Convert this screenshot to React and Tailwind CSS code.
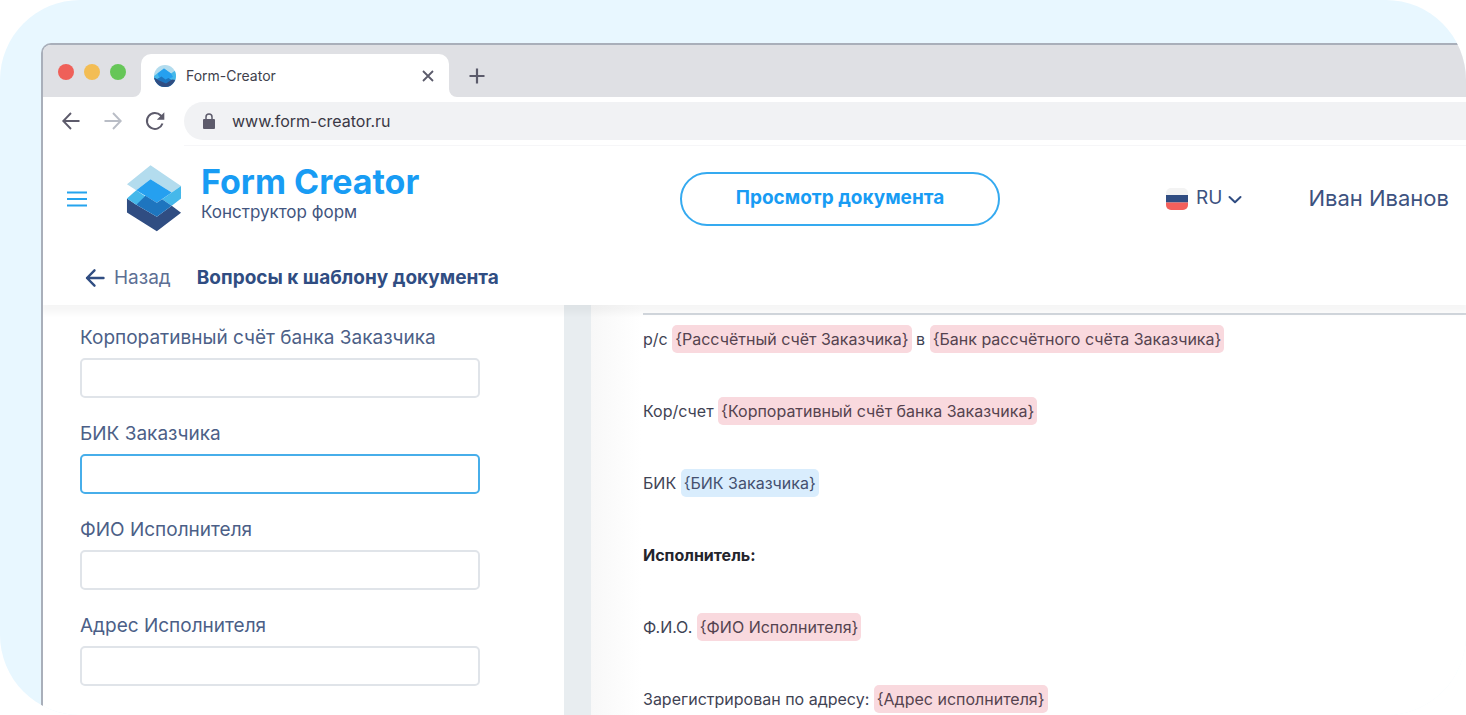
import { useId } from "react";

const fields = [
  { id: "corr", label: "Корпоративный счёт банка Заказчика" },
  { id: "bik", label: "БИК Заказчика", active: true },
  { id: "fio", label: "ФИО Исполнителя" },
  { id: "addr", label: "Адрес Исполнителя" },
];

function LogoShapes() {
  return (
    <>
      <path d="M123 31 215 93 187 113 123 73 80 106 52 88Z" fill="#b3dcee" />
      <path d="M52 131 80 150 142 186 187 153 215 174 142 230 52 173Z" fill="#304d82" />
      <path d="M80 106 108 125 115 130 80 150 52 131Z" fill="#45b8ea" />
      <path d="M215 93V131L187 153 158 133 187 113Z" fill="#45b8ea" />
      <path d="M123 73 187 113 142 144 80 106Z" fill="#25a0f0" />
      <path d="M108 123 142 144 158 133 187 153 142 186 80 150Z" fill="#1e75bf" />
    </>
  );
}

function Favicon() {
  const clip = useId();
  return (
    <svg className="h-[22px] w-[22px] shrink-0" viewBox="0 0 22 22" aria-hidden="true">
      <clipPath id={clip}>
        <circle cx="11" cy="11" r="11" />
      </clipPath>
      <g clipPath={`url(#${clip})`}>
        <path d="M0 0H22V22H0Z" fill="#b3dcee" />
        <path d="M0 11 10 3.500 17 8.500 22 5V22H0Z" fill="#45b8ea" />
        <path d="M3.500 8.500 10 3.500 17 8.500 19 12 12 15 5 12Z" fill="#25a0f0" />
        <path d="M0 13 3 14 7.500 11.500 11.500 14.500 14.500 13 18.500 15.500 16 22H4Z" fill="#1e75bf" />
        <path d="M0 12.500 4 15 12 18.500 18 14.500 22 15V22H0Z" fill="#304d82" />
      </g>
    </svg>
  );
}

function TabStrip() {
  return (
    <div className="flex h-[52px] items-end bg-[#dfe0e4] pl-[15px]">
      <div className="flex h-full items-center gap-[10px] pr-[7px] pt-0.5">
        <span className="h-4 w-4 rounded-full bg-[#ef6059]" />
        <span className="h-4 w-4 rounded-full bg-[#f3bd54]" />
        <span className="h-4 w-4 rounded-full bg-[#66c658]" />
      </div>
      <svg className="h-2 w-2 shrink-0" viewBox="0 0 8 8" aria-hidden="true">
        <path d="M8 0V8H0A8 8 0 0 0 8 0Z" fill="#fff" />
      </svg>
      <div className="flex h-[43px] w-[308px] items-center rounded-t-[10px] bg-white pl-[13px] pr-[14px]">
        <Favicon />
        <span className="ml-[10px] text-sm text-[#403f4c]">Form-Creator</span>
        <button type="button" aria-label="Закрыть вкладку" className="ml-auto">
          <svg className="h-[14px] w-[14px]" viewBox="0 0 14 14" fill="none" stroke="#5b5b6b" strokeWidth="1.8" aria-hidden="true">
            <path d="M2 2 12 12M12 2 2 12" />
          </svg>
        </button>
      </div>
      <svg className="h-2 w-2 shrink-0" viewBox="0 0 8 8" aria-hidden="true">
        <path d="M0 0V8H8A8 8 0 0 1 0 0Z" fill="#fff" />
      </svg>
      <button type="button" aria-label="Новая вкладка" className="flex h-[43px] items-center pl-3">
        <svg className="h-4 w-4" viewBox="0 0 16 16" fill="none" stroke="#5b5b6b" strokeWidth="2.200" aria-hidden="true">
          <path d="M8 .5V15.5M.5 8H15.5" />
        </svg>
      </button>
    </div>
  );
}

function Toolbar() {
  return (
    <div className="flex h-12 items-center pl-[18px]">
      <button type="button" aria-label="Назад по истории">
        <svg className="h-5 w-5" viewBox="0 0 20 20" fill="none" stroke="#5d5b6b" strokeWidth="1.9" aria-hidden="true">
          <path d="M18.500 10H2.500M10 2 2.300 10 10 18" />
        </svg>
      </button>
      <button type="button" aria-label="Вперёд" className="ml-[22px]">
        <svg className="h-5 w-5" viewBox="0 0 20 20" fill="none" stroke="#b9bdc6" strokeWidth="1.9" aria-hidden="true">
          <path d="M1.500 10H17.500M10 2 17.700 10 10 18" />
        </svg>
      </button>
      <button type="button" aria-label="Обновить" className="ml-[22px]">
        <svg className="h-5 w-5" viewBox="0 0 20 20" fill="none" stroke="#5d5b6b" strokeWidth="2" aria-hidden="true">
          <path d="M17.500 12.500A8 8 0 1 1 15.800 4.500L17.500 6.500" />
          <path d="M19.300 1.200V8.700H11.800Z" fill="#5d5b6b" stroke="none" />
        </svg>
      </button>
      <div className="ml-[19px] flex h-[38px] flex-1 items-center rounded-l-full bg-[#f1f2f4] pl-[19px]">
        <svg className="h-4 w-3 shrink-0" viewBox="0 0 12 16" aria-hidden="true">
          <path d="M3 7V4A3 3 0 0 1 9 4V7" fill="none" stroke="#5d5b6b" strokeWidth="1.5" />
          <rect y="6" width="12" height="10" rx="1" fill="#5d5b6b" />
        </svg>
        <input
          type="text"
          aria-label="Адресная строка"
          defaultValue="www.form-creator.ru"
          className="ml-[17px] flex-1 bg-transparent text-base text-[#3a3845] outline-none"
        />
      </div>
    </div>
  );
}

function Header() {
  return (
    <header className="relative z-10 bg-white shadow-[0_6px_6px_2px_rgba(0,0,0,0.04)]">
      <div className="ml-[141px] border-t border-[#f6f6f8]" />
      <div className="flex h-[105px] items-center pr-[17px]">
        <div className="flex w-[637px] shrink-0 items-center pl-6">
          <button type="button" aria-label="Меню">
            <svg className="h-4 w-5" viewBox="0 0 20 16" stroke="#25a4ee" strokeWidth="1.8" aria-hidden="true">
              <path d="M0 1.500H20M0 8H20M0 14.500H20" />
            </svg>
          </button>
          <a href="#" className="ml-[39px] flex items-center">
            <svg className="h-[67px] w-[56px]" viewBox="50 30 167 202" aria-hidden="true">
              <LogoShapes />
            </svg>
            <span className="ml-[19px] block pb-[9px]">
              <span className="block text-[34px] font-bold leading-9 text-[#189cf4]">Form Creator</span>
              <span className="block text-[17px] leading-6 text-[#42557e]">Конструктор форм</span>
            </span>
          </a>
        </div>
        <button
          type="button"
          className="h-[54px] w-80 shrink-0 rounded-full border-2 border-[#35aaf0] text-[19px] font-bold text-[#189cf4]"
        >
          Просмотр документа
        </button>
        <button type="button" className="ml-auto flex items-center text-[19px] text-[#3d527f]">
          <svg className="h-[22px] w-[22px]" viewBox="0 0 22 22" aria-hidden="true">
            <rect width="22" height="22" rx="5" fill="#f3f3f3" />
            <path d="M0 7H22V14.500H0Z" fill="#304d82" />
            <path d="M0 14.500H22V17A5 5 0 0 1 17 22H5A5 5 0 0 1 0 17Z" fill="#f4605c" />
          </svg>
          <span className="ml-2">RU</span>
          <svg className="ml-[6px] h-[14px] w-[14px]" viewBox="0 0 14 14" fill="none" stroke="#304d82" strokeWidth="2" strokeLinecap="round" strokeLinejoin="round" aria-hidden="true">
            <path d="M1.500 5 7 10.300 12.500 5" />
          </svg>
        </button>
        <span className="ml-[66px] text-[22px] text-[#3d527f]">Иван Иванов</span>
      </div>
      <div className="flex h-[54px] items-center pl-[42px]">
        <a href="#" className="flex items-center text-[19px] text-[#5d6f94]">
          <svg className="mr-[9px] h-5 w-5" viewBox="0 0 20 20" fill="none" stroke="#304d82" strokeWidth="2.400" strokeLinecap="round" strokeLinejoin="round" aria-hidden="true">
            <path d="M18.500 10H2M9.500 2.300 2 10 9.500 17.700" />
          </svg>
          Назад
        </a>
        <h1 className="ml-[26px] text-[19px] font-bold text-[#304d82]">Вопросы к шаблону документа</h1>
      </div>
    </header>
  );
}

function Mark({ active, children }) {
  return (
    <mark
      className={
        active
          ? "rounded-[5px] bg-[#d9edfd] px-[3px] py-1 text-[#44506f]"
          : "rounded-[5px] bg-[#f9d9de] px-[3px] py-1 text-[#55434f]"
      }
    >
      {children}
    </mark>
  );
}

function Document() {
  return (
    <article className="min-w-0 flex-1 bg-linear-to-r from-[#f8f8f8] to-white to-[50px] pl-[52px] pt-2">
      <div className="flex flex-col gap-[46px] border-t-2 border-[#d3d8de] pt-[11px] text-base leading-[26px] text-[#3f4354]">
        <p>р/с <Mark>{"{Рассчётный счёт Заказчика}"}</Mark> в <Mark>{"{Банк рассчётного счёта Заказчика}"}</Mark></p>
        <p>Кор/счет <Mark>{"{Корпоративный счёт банка Заказчика}"}</Mark></p>
        <p>БИК <Mark active>{"{БИК Заказчика}"}</Mark></p>
        <p className="font-bold text-[#24242c]">Исполнитель:</p>
        <p>Ф.И.О. <Mark>{"{ФИО Исполнителя}"}</Mark></p>
        <p>Зарегистрирован по адресу: <Mark>{"{Адрес исполнителя}"}</Mark></p>
      </div>
    </article>
  );
}

export default function App() {
  return (
    <div className="flex min-h-screen overflow-hidden rounded-[80px] bg-[#e8f7ff] pl-[41px] pt-[43px] font-['Inter','Noto_Sans',sans-serif]">
      <div className="flex min-w-0 flex-1 flex-col overflow-hidden rounded-tl-[10px] border-l-2 border-t-2 border-[#a9afba] bg-white">
        <TabStrip />
        <Toolbar />
        <Header />
        <main className="flex flex-1">
          <form className="flex w-[521px] shrink-0 flex-col gap-6 pl-[37px] pr-[84px] pt-[21px]">
            {fields.map((f) => (
              <div key={f.id} className="flex flex-col gap-2">
                <label htmlFor={f.id} className="text-[19px] leading-6 text-[#4c5f87]">{f.label}</label>
                <input
                  id={f.id}
                  type="text"
                  className={
                    f.active
                      ? "h-10 rounded-[5px] border-2 border-[#47aeea] px-3 outline-none"
                      : "h-10 rounded-[5px] border-2 border-[#e0e4e9] px-3 outline-none"
                  }
                />
              </div>
            ))}
          </form>
          <div className="w-[27px] shrink-0 bg-[#e8edf0]" />
          <Document />
        </main>
      </div>
    </div>
  );
}
